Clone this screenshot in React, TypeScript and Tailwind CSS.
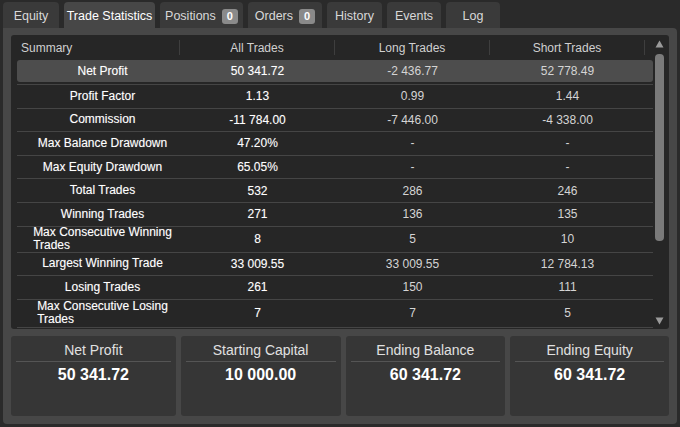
import React from "react";

const tabs = [
  { label: "Equity", w: "w-[56px]" },
  { label: "Trade Statistics", w: "w-[91px]", active: true },
  { label: "Positions", w: "w-[83px]", badge: "0" },
  { label: "Orders", w: "w-[74px]", badge: "0" },
  { label: "History", w: "w-[55px]" },
  { label: "Events", w: "w-[54px]" },
  { label: "Log", w: "w-[54px]" },
];

type Row = { label: React.ReactNode; all: string; long: string; short: string; h: string };

const rows: Row[] = [
  { label: "Net Profit", all: "50 341.72", long: "-2 436.77", short: "52 778.49", h: "h-[22px]" },
  { label: "Profit Factor", all: "1.13", long: "0.99", short: "1.44", h: "h-[23.6px]" },
  { label: "Commission", all: "-11 784.00", long: "-7 446.00", short: "-4 338.00", h: "h-[23.6px]" },
  { label: "Max Balance Drawdown", all: "47.20%", long: "-", short: "-", h: "h-[23.6px]" },
  { label: "Max Equity Drawdown", all: "65.05%", long: "-", short: "-", h: "h-[23.6px]" },
  { label: "Total Trades", all: "532", long: "286", short: "246", h: "h-[23.6px]" },
  { label: "Winning Trades", all: "271", long: "136", short: "135", h: "h-[23.6px]" },
  {
    label: (
      <>
        Max Consecutive Winning
        <br />
        Trades
      </>
    ),
    all: "8",
    long: "5",
    short: "10",
    h: "h-[26px]",
  },
  { label: "Largest Winning Trade", all: "33 009.55", long: "33 009.55", short: "12 784.13", h: "h-[23.6px]" },
  { label: "Losing Trades", all: "261", long: "150", short: "111", h: "h-[23.6px]" },
  {
    label: (
      <>
        Max Consecutive Losing
        <br />
        Trades
      </>
    ),
    all: "7",
    long: "7",
    short: "5",
    h: "h-[28px]",
  },
];

const cards = [
  { title: "Net Profit", value: "50 341.72", w: "w-[165px]" },
  { title: "Starting Capital", value: "10 000.00", w: "w-[160px]" },
  { title: "Ending Balance", value: "60 341.72", w: "w-[160px]" },
  { title: "Ending Equity", value: "60 341.72", w: "w-[159px]" },
];

export default function App() {
  return (
    <div
      className="w-[680px] h-[427px] bg-[#2a2a2a] text-[#dcdcdc] overflow-hidden flex flex-col px-[3px] pt-[2px] pb-[3px]"
      style={{ fontFamily: '"Liberation Sans", Arial, sans-serif' }}
    >
      {/* Tabs */}
      <div className="flex gap-[5px] h-[26px] shrink-0">
        {tabs.map((t) => (
          <div
            key={t.label}
            className={
              "flex items-center justify-center gap-[6px] rounded-t-[4px] text-[12.5px] pt-[3px] " +
              t.w +
              (t.active ? " bg-[#474747] text-white" : " bg-[#3a3a3a] text-[#d8d8d8]")
            }
          >
            <span>{t.label}</span>
            {t.badge && (
              <span className="bg-[#8a8a8a] text-white text-[11px] font-bold rounded-[3px] px-[5px] leading-[15px]">
                {t.badge}
              </span>
            )}
          </div>
        ))}
      </div>

      {/* Panel */}
      <div className="flex-1 bg-[#474747] rounded-b-[4px] rounded-tr-[4px] px-[8px] pt-[7px] pb-[8px] flex flex-col gap-[7px]">
        {/* Table */}
        <div className="h-[294px] bg-[#262626] rounded-[3px] flex overflow-hidden text-[12px]">
          <div className="flex-1 pl-[6px] flex flex-col">
            <div className="h-[25px] shrink-0 flex items-center text-[#d0d0d0]">
              <div className="w-[163px] pl-[4px] border-r border-[#3e3e3e] h-[15px] flex items-center">Summary</div>
              <div className="w-[155px] border-r border-[#3e3e3e] h-[15px] flex items-center justify-center">All Trades</div>
              <div className="w-[155px] border-r border-[#3e3e3e] h-[15px] flex items-center justify-center">Long Trades</div>
              <div className="w-[155px] border-r border-[#3e3e3e] h-[15px] flex items-center justify-center">Short Trades</div>
            </div>
            {rows.map((r, i) => (
              <div
                key={i}
                className={
                  "shrink-0 flex items-center w-[636px] " +
                  r.h +
                  (i === 0 ? " bg-[#4d4d4d] rounded-[3px] mb-[2px]" : " border-t border-[#454545]")
                }
              >
                <div className="w-[163px] pl-[8px] flex justify-center text-white [text-shadow:0_0_1px_rgba(255,255,255,0.35)]">
                  <span className="text-left leading-[13px]">{r.label}</span>
                </div>
                <div className="w-[155px] text-center text-white [text-shadow:0_0_1px_rgba(255,255,255,0.3)]">{r.all}</div>
                <div className="w-[155px] text-center text-[#d4d4d4]">{r.long}</div>
                <div className="w-[155px] text-center text-[#d4d4d4]">{r.short}</div>
              </div>
            ))}
            <div className="border-t border-[#454545] w-[636px]" />
          </div>
          {/* Scrollbar */}
          <div className="w-[20px] flex flex-col items-center pt-[5px] pb-[4px] pr-[3px]">
            <svg width="9" height="8" viewBox="0 0 9 8">
              <path d="M4.5 0.5 L8.5 7.5 L0.5 7.5 Z" fill="#9a9a9a" />
            </svg>
            <div className="w-[9px] flex-1 mt-[6px] mb-[3px] flex flex-col">
              <div className="h-[187px] bg-[#7a7a7a] rounded-[4px]" />
            </div>
            <svg width="9" height="8" viewBox="0 0 9 8">
              <path d="M0.5 0.5 L8.5 0.5 L4.5 7.5 Z" fill="#9a9a9a" />
            </svg>
          </div>
        </div>

        {/* Cards */}
        <div className="flex gap-[5px] flex-1">
          {cards.map((c) => (
            <div key={c.title} className={"bg-[#363636] rounded-[3px] px-[5px] pt-[6px] flex flex-col " + c.w}>
              <div className="text-[14px] text-[#e0e0e0] text-center leading-[17px] pb-[2px] border-b border-[#555555]">
                {c.title}
              </div>
              <div className="text-[16px] font-bold text-white text-center leading-[20px] mt-[3px]">{c.value}</div>
            </div>
          ))}
        </div>
      </div>
    </div>
  );
}
